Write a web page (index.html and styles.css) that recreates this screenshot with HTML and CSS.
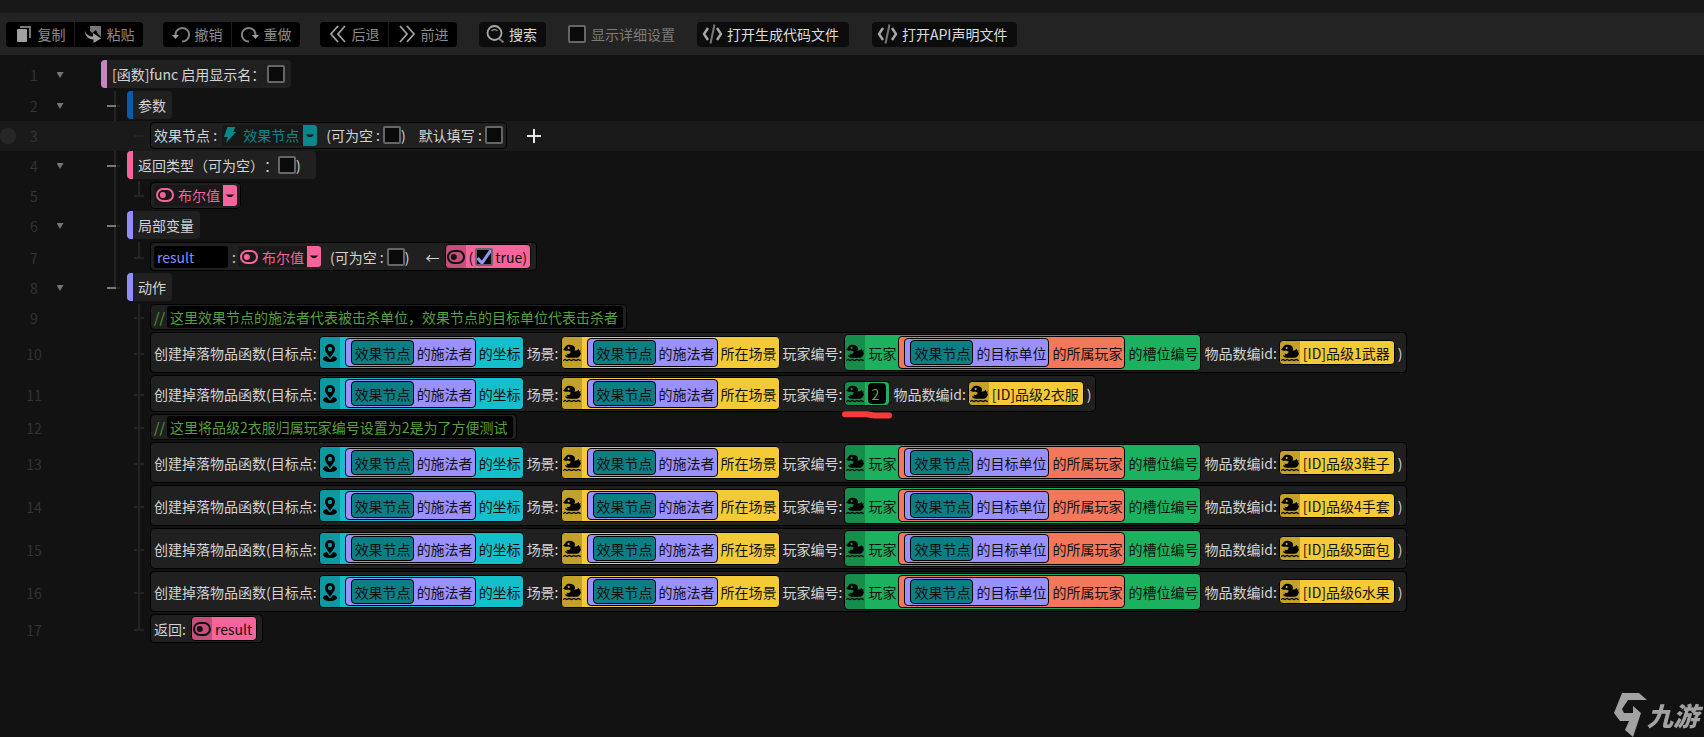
FILE: index.html
```html
<!DOCTYPE html>
<html lang="zh-CN">
<head>
<meta charset="utf-8">
<title>触发编辑器</title>
<link rel="stylesheet" href="styles.css">
</head>
<body>
<svg class="defs" aria-hidden="true">
  <symbol id="pin" viewBox="0 0 16 20"><path fill-rule="evenodd" d="M8 1a5 5 0 0 1 5 5c0 3-3 5.500-5 9-2-3.500-5-6-5-9a5 5 0 0 1 5-5zM8 3.800a2.200 2.200 0 1 0 0 4.400 2.200 2.200 0 0 0 0-4.400z"/><path d="M4.800 13C2.500 13.500 1 14.500 1 15.800 1 17.700 4 19 8 19s7-1.300 7-3.200c0-1.300-1.500-2.300-3.800-2.800L8 16.800z"/></symbol>
  <symbol id="duck" viewBox="0 0 18 18"><path fill-rule="evenodd" d="M0 5.400C1.400 4.400 1.800 3.400 2.800 2.200 3.800 1.200 5 .8 6.600.8 9.600.8 11.600 2 12 4.200c.1 1-.2 1.600-.8 2.200 1.500.4 3.400 0 4.600-1.600l.4 1.700 1.700.1-.9 1.500 1 .9c-.5 2.800-2 4.300-4 4.800H5.600C3.600 13.600 2.200 12.800 2 11.200l2.600.2L3.200 9.800l3 .2L8 7.800 5 6.400C3.600 7 1.600 6.800 0 5.400zM5.600 2.800a1.100 1.100 0 1 0 .1 0z"/><path d="M0 16.600l2-1.200 2 1.200 2.200-1.200 2.300 1.200 2.300-1.200 2.200 1.200 2.200-1.200 2.500 1.200" fill="none" stroke="currentColor" stroke-width="1.200"/></symbol>
  <symbol id="toggle" viewBox="0 0 18 14"><rect x="1" y="1" width="16" height="12" rx="6" fill="none" stroke="currentColor" stroke-width="2"/><circle cx="6.800" cy="7" r="3"/></symbol>
  <symbol id="bolt" viewBox="0 0 12 16"><path d="M3.500 0h8L9 5h3L2 16l1.800-6H0z"/></symbol>
  <symbol id="caret" viewBox="0 0 14 21"><path d="M2.500 9.500h9L8.500 12h-3z"/></symbol>
  <symbol id="code" viewBox="0 0 21 20"><path d="M6 4 2 10l4 6M15 4l4 6-4 6" fill="none" stroke="#a8a8a8" stroke-width="2.400"/><path d="M12.500.5 8.500 19.500" stroke="#777" stroke-width="2"/></symbol>
</svg>

<div class="strip"></div>
<header class="toolbar">
  <div class="group">
    <button type="button" class="tool"><svg class="ico" viewBox="0 0 18 18"><path d="M5 1h11v12h-2V3H5z" fill="#777"/><rect x="2" y="4" width="10" height="13" rx="1" fill="#a0a0a0"/></svg>复制</button>
    <button type="button" class="tool"><svg class="ico" viewBox="0 0 18 18"><path d="M6 1h11v11l-3-3-2-4-4 3-2-2z" fill="#777"/><path d="M1 5.500c1 4 4 6 8 6V8l8 5.500L9.500 18v-3.500C4 14.500 1 11 1 5.500z" fill="#a0a0a0"/></svg>粘贴</button>
  </div>
  <div class="group">
    <button type="button" class="tool"><svg class="ico" viewBox="0 0 18 18"><path d="M3.500 10A6.800 6.800 0 1 1 10 16.500" fill="none" stroke="#808080" stroke-width="2"/><path d="M0 10h7l-3.500 4z" fill="#a0a0a0"/></svg>撤销</button>
    <button type="button" class="tool"><svg class="ico" viewBox="0 0 18 18"><path d="M14.500 10A6.800 6.800 0 1 0 8 16.500" fill="none" stroke="#808080" stroke-width="2"/><path d="M18 10h-7l3.500 4z" fill="#a0a0a0"/></svg>重做</button>
  </div>
  <div class="group">
    <button type="button" class="tool"><svg class="ico" viewBox="0 0 18 18"><path d="M9 1 2 9l7 8M16 1 9 9l7 8" fill="none" stroke="#a0a0a0" stroke-width="1.800"/></svg>后退</button>
    <button type="button" class="tool"><svg class="ico" viewBox="0 0 18 18"><path d="m2 1 7 8-7 8M9 1l7 8-7 8" fill="none" stroke="#a0a0a0" stroke-width="1.800"/></svg>前进</button>
  </div>
  <button type="button" class="tool solo search"><svg class="ico" viewBox="0 0 18 18"><circle cx="8.500" cy="8" r="7" fill="none" stroke="#a8a8a8" stroke-width="1.800"/><path d="M5.500 6q3-3 6 0" fill="none" stroke="#888" stroke-width="1.300"/><path d="m13.500 14 4 3.500" stroke="#777" stroke-width="2"/></svg>搜索</button>
  <label class="detail"><input type="checkbox" class="box">显示详细设置</label>
  <button type="button" class="tool solo file"><svg class="ico-code"><use href="#code"/></svg>打开生成代码文件</button>
  <button type="button" class="tool solo file"><svg class="ico-code"><use href="#code"/></svg>打开API声明文件</button>
</header>

<main class="editor">
  <div class="row tall">
    <span class="mark"></span><span class="num">1</span><button type="button" class="fold" aria-label="折叠"></button>
    <div class="block head orchid"><label class="field"><span>[函数]func 启用显示名：</span><input type="checkbox" class="box"></label></div>
  </div>
  <div class="row">
    <span class="mark"></span><span class="num">2</span><button type="button" class="fold" aria-label="折叠"></button>
    <span class="guide main dash"></span>
    <div class="block head blue">参数</div>
  </div>
  <div class="row current">
    <span class="mark"></span><span class="num">3</span><span class="nofold"></span>
    <span class="guide"></span><span class="guide sub only"></span>
    <div class="block stmt">
      <span class="t">效果节点 : </span>
      <span class="type teal-type"><svg class="bolt"><use href="#bolt"/></svg><span class="pick"><select aria-label="参数类型"><option>效果节点</option></select><svg class="caret"><use href="#caret"/></svg></span></span>
      <label class="field gap"><span>(可为空 : </span><input type="checkbox" class="box"><span>)</span></label>
      <label class="field gap-wide"><span>默认填写 : </span><input type="checkbox" class="box"></label>
    </div>
    <button type="button" class="add" aria-label="添加"><svg viewBox="0 0 14 14"><path d="M7 0v14M0 7h14" stroke="#e8e8e8" stroke-width="2"/></svg></button>
  </div>
  <div class="row">
    <span class="mark"></span><span class="num">4</span><button type="button" class="fold" aria-label="折叠"></button>
    <span class="guide main dash"></span>
    <div class="block head rose"><label class="field"><span>返回类型（可为空）：</span><input type="checkbox" class="box"><span>)</span></label></div>
  </div>
  <div class="row">
    <span class="mark"></span><span class="num">5</span><span class="nofold"></span>
    <span class="guide main"></span><span class="guide sub last"></span>
    <div class="block stmt">
      <span class="type pink-type first"><svg class="toggle"><use href="#toggle"/></svg><span class="pick"><select aria-label="返回类型"><option>布尔值</option></select><svg class="caret"><use href="#caret"/></svg></span></span>
    </div>
  </div>
  <div class="row tall">
    <span class="mark"></span><span class="num">6</span><button type="button" class="fold" aria-label="折叠"></button>
    <span class="guide main dash"></span>
    <div class="block head violet">局部变量</div>
  </div>
  <div class="row">
    <span class="mark"></span><span class="num">7</span><span class="nofold"></span>
    <span class="guide main"></span><span class="guide sub last"></span>
    <div class="block stmt roomy">
      <input type="text" class="name" value="result" aria-label="变量名">
      <span class="colon">:</span>
      <span class="type pink-type"><svg class="toggle"><use href="#toggle"/></svg><span class="pick"><select aria-label="变量类型"><option>布尔值</option></select><svg class="caret"><use href="#caret"/></svg></span></span>
      <label class="field gap"><span>(可为空 : </span><input type="checkbox" class="box"><span>)</span></label>
      <span class="arrow">←</span>
      <span class="p pink"><i class="tag"><svg class="toggle"><use href="#toggle"/></svg></i><label class="field value"><span>(</span><input type="checkbox" class="box" checked><span>true)</span></label></span>
    </div>
  </div>
  <div class="row tall">
    <span class="mark"></span><span class="num">8</span><button type="button" class="fold" aria-label="折叠"></button>
    <span class="guide main dash end"></span>
    <div class="block head violet">动作</div>
  </div>
  <div class="row auto">
    <span class="mark"></span><span class="num">9</span><span class="nofold"></span>
    <span class="guide"></span><span class="guide sub"></span>
    <div class="block stmt note"><span>//</span><input type="text" class="note-long" aria-label="注释" value="这里效果节点的施法者代表被击杀单位，效果节点的目标单位代表击杀者"></div>
  </div>
  <div class="row auto">
    <span class="mark"></span><span class="num">10</span><span class="nofold"></span>
    <span class="guide"></span><span class="guide sub"></span>
    <div class="block stmt call"><span class="t">创建掉落物品函数(目标点:</span><span class="p cyan"><i class="tag"><svg class="pin"><use href="#pin"/></svg></i><span class="p purple nest"><span class="p teal"><span class="t">效果节点</span></span><span class="t">的施法者</span></span><span class="t">的坐标</span></span><span class="t">场景:</span><span class="p yellow"><i class="tag"><svg class="duck"><use href="#duck"/></svg></i><span class="p purple nest"><span class="p teal"><span class="t">效果节点</span></span><span class="t">的施法者</span></span><span class="t">所在场景</span></span><span class="t">玩家编号:</span><span class="p green"><i class="tag"><svg class="duck"><use href="#duck"/></svg></i><span class="t">玩家</span><span class="p coral"><span class="p purple"><span class="p teal"><span class="t">效果节点</span></span><span class="t">的目标单位</span></span><span class="t">的所属玩家</span></span><span class="t">的槽位编号</span></span><span class="t">物品数编id:</span><span class="p yellow"><i class="tag"><svg class="duck"><use href="#duck"/></svg></i><span class="t id">[ID]品级1武器</span></span><span class="t">)</span></div>
  </div>
  <div class="row auto">
    <span class="mark"></span><span class="num">11</span><span class="nofold"></span>
    <span class="guide"></span><span class="guide sub"></span>
    <div class="block stmt call"><span class="t">创建掉落物品函数(目标点:</span><span class="p cyan"><i class="tag"><svg class="pin"><use href="#pin"/></svg></i><span class="p purple nest"><span class="p teal"><span class="t">效果节点</span></span><span class="t">的施法者</span></span><span class="t">的坐标</span></span><span class="t">场景:</span><span class="p yellow"><i class="tag"><svg class="duck"><use href="#duck"/></svg></i><span class="p purple nest"><span class="p teal"><span class="t">效果节点</span></span><span class="t">的施法者</span></span><span class="t">所在场景</span></span><span class="t">玩家编号:</span><span class="p green marked"><i class="tag"><svg class="duck"><use href="#duck"/></svg></i><input type="text" class="digit" value="2" aria-label="玩家编号"><svg class="scribble" viewBox="0 0 50 8"><path d="M3 3.200h22l7 1.300h15" fill="none" stroke="#f93a3a" stroke-width="6" stroke-linecap="round" stroke-linejoin="round"/></svg></span><span class="t">物品数编id:</span><span class="p yellow"><i class="tag"><svg class="duck"><use href="#duck"/></svg></i><span class="t id">[ID]品级2衣服</span></span><span class="t">)</span></div>
  </div>
  <div class="row auto">
    <span class="mark"></span><span class="num">12</span><span class="nofold"></span>
    <span class="guide"></span><span class="guide sub"></span>
    <div class="block stmt note"><span>//</span><input type="text" class="note-short" aria-label="注释" value="这里将品级2衣服归属玩家编号设置为2是为了方便测试"></div>
  </div>
  <div class="row auto">
    <span class="mark"></span><span class="num">13</span><span class="nofold"></span>
    <span class="guide"></span><span class="guide sub"></span>
    <div class="block stmt call"><span class="t">创建掉落物品函数(目标点:</span><span class="p cyan"><i class="tag"><svg class="pin"><use href="#pin"/></svg></i><span class="p purple nest"><span class="p teal"><span class="t">效果节点</span></span><span class="t">的施法者</span></span><span class="t">的坐标</span></span><span class="t">场景:</span><span class="p yellow"><i class="tag"><svg class="duck"><use href="#duck"/></svg></i><span class="p purple nest"><span class="p teal"><span class="t">效果节点</span></span><span class="t">的施法者</span></span><span class="t">所在场景</span></span><span class="t">玩家编号:</span><span class="p green"><i class="tag"><svg class="duck"><use href="#duck"/></svg></i><span class="t">玩家</span><span class="p coral"><span class="p purple"><span class="p teal"><span class="t">效果节点</span></span><span class="t">的目标单位</span></span><span class="t">的所属玩家</span></span><span class="t">的槽位编号</span></span><span class="t">物品数编id:</span><span class="p yellow"><i class="tag"><svg class="duck"><use href="#duck"/></svg></i><span class="t id">[ID]品级3鞋子</span></span><span class="t">)</span></div>
  </div>
  <div class="row auto">
    <span class="mark"></span><span class="num">14</span><span class="nofold"></span>
    <span class="guide"></span><span class="guide sub"></span>
    <div class="block stmt call"><span class="t">创建掉落物品函数(目标点:</span><span class="p cyan"><i class="tag"><svg class="pin"><use href="#pin"/></svg></i><span class="p purple nest"><span class="p teal"><span class="t">效果节点</span></span><span class="t">的施法者</span></span><span class="t">的坐标</span></span><span class="t">场景:</span><span class="p yellow"><i class="tag"><svg class="duck"><use href="#duck"/></svg></i><span class="p purple nest"><span class="p teal"><span class="t">效果节点</span></span><span class="t">的施法者</span></span><span class="t">所在场景</span></span><span class="t">玩家编号:</span><span class="p green"><i class="tag"><svg class="duck"><use href="#duck"/></svg></i><span class="t">玩家</span><span class="p coral"><span class="p purple"><span class="p teal"><span class="t">效果节点</span></span><span class="t">的目标单位</span></span><span class="t">的所属玩家</span></span><span class="t">的槽位编号</span></span><span class="t">物品数编id:</span><span class="p yellow"><i class="tag"><svg class="duck"><use href="#duck"/></svg></i><span class="t id">[ID]品级4手套</span></span><span class="t">)</span></div>
  </div>
  <div class="row auto">
    <span class="mark"></span><span class="num">15</span><span class="nofold"></span>
    <span class="guide"></span><span class="guide sub"></span>
    <div class="block stmt call"><span class="t">创建掉落物品函数(目标点:</span><span class="p cyan"><i class="tag"><svg class="pin"><use href="#pin"/></svg></i><span class="p purple nest"><span class="p teal"><span class="t">效果节点</span></span><span class="t">的施法者</span></span><span class="t">的坐标</span></span><span class="t">场景:</span><span class="p yellow"><i class="tag"><svg class="duck"><use href="#duck"/></svg></i><span class="p purple nest"><span class="p teal"><span class="t">效果节点</span></span><span class="t">的施法者</span></span><span class="t">所在场景</span></span><span class="t">玩家编号:</span><span class="p green"><i class="tag"><svg class="duck"><use href="#duck"/></svg></i><span class="t">玩家</span><span class="p coral"><span class="p purple"><span class="p teal"><span class="t">效果节点</span></span><span class="t">的目标单位</span></span><span class="t">的所属玩家</span></span><span class="t">的槽位编号</span></span><span class="t">物品数编id:</span><span class="p yellow"><i class="tag"><svg class="duck"><use href="#duck"/></svg></i><span class="t id">[ID]品级5面包</span></span><span class="t">)</span></div>
  </div>
  <div class="row auto">
    <span class="mark"></span><span class="num">16</span><span class="nofold"></span>
    <span class="guide"></span><span class="guide sub"></span>
    <div class="block stmt call"><span class="t">创建掉落物品函数(目标点:</span><span class="p cyan"><i class="tag"><svg class="pin"><use href="#pin"/></svg></i><span class="p purple nest"><span class="p teal"><span class="t">效果节点</span></span><span class="t">的施法者</span></span><span class="t">的坐标</span></span><span class="t">场景:</span><span class="p yellow"><i class="tag"><svg class="duck"><use href="#duck"/></svg></i><span class="p purple nest"><span class="p teal"><span class="t">效果节点</span></span><span class="t">的施法者</span></span><span class="t">所在场景</span></span><span class="t">玩家编号:</span><span class="p green"><i class="tag"><svg class="duck"><use href="#duck"/></svg></i><span class="t">玩家</span><span class="p coral"><span class="p purple"><span class="p teal"><span class="t">效果节点</span></span><span class="t">的目标单位</span></span><span class="t">的所属玩家</span></span><span class="t">的槽位编号</span></span><span class="t">物品数编id:</span><span class="p yellow"><i class="tag"><svg class="duck"><use href="#duck"/></svg></i><span class="t id">[ID]品级6水果</span></span><span class="t">)</span></div>
  </div>
  <div class="row auto">
    <span class="mark"></span><span class="num">17</span><span class="nofold"></span>
    <span class="guide"></span><span class="guide sub last"></span>
    <div class="block stmt roomy"><span class="t">返回: </span><span class="p pink"><i class="tag"><svg class="toggle"><use href="#toggle"/></svg></i><span class="t id">result</span></span></div>
  </div>
</main>

<div class="watermark"><svg viewBox="0 0 33 44"><path d="M8 0h17l8 7H14L8 16l2 4h9v-7l8 7-8 24-8-7 4-9H6L0 20z" fill="#a2a2a2"/></svg><span>九游</span></div>
</body>
</html>
```

FILE: styles.css
```css
* { box-sizing: border-box; }

body {
  margin: 0;
  min-height: 100vh;
  background: #121212;
  color: #d4d4d4;
  font: 14px/20px "Noto Sans CJK SC", "Noto Sans", sans-serif;
  text-spacing-trim: space-all;
  overflow-y: hidden;
}

button, input, select { font: inherit; color: inherit; margin: 0; padding: 0; border: 0; background: none; }
svg { display: block; fill: currentColor; }
.defs { display: none; }

.strip { height: 13px; background: #181818; }

/* Toolbar */
.toolbar {
  display: flex;
  align-items: center;
  height: 42px;
  padding: 0 6px;
  background: #232323;
  white-space: nowrap;
}
.group { display: flex; gap: 1px; margin-right: 20px; border-radius: 4px; overflow: hidden; background: #1c1c1c; }
.tool {
  display: flex;
  align-items: center;
  justify-content: center;
  gap: 5px;
  width: 68px;
  height: 25px;
  background: #000;
  color: #8c8c8c;
}
.ico { width: 18px; height: 18px; }
.ico-code { width: 21px; height: 20px; }
.solo { width: auto; padding: 0 9px 0 7px; border-radius: 4px; background: #0c0c0c; color: #dcdcdc; }
.search { margin: 0 22px 0 2px; }
.detail { display: flex; align-items: center; gap: 5px; color: #7c7c7c; margin-right: 22px; }
.file { padding: 0 10px 0 5px; margin-right: 23px; gap: 4px; }

.box {
  appearance: none;
  flex: none;
  width: 18px;
  height: 18px;
  border: 2px solid #666;
  border-radius: 2px;
  background: #0a0a0a;
}
.box:checked {
  background: #0a0a0a url("data:image/svg+xml,%3Csvg xmlns='http://www.w3.org/2000/svg' viewBox='0 0 18 18'%3E%3Cpath d='M2.500 10 7 15 16 2' fill='none' stroke='%239a94ff' stroke-width='3'/%3E%3C/svg%3E") center / 18px 18px no-repeat border-box;
}

/* Code rows */
.editor { padding-top: 5px; overflow-x: auto; }
.row { display: flex; align-items: center; min-height: 30px; white-space: nowrap; }
.tall { min-height: 31px; padding-bottom: 1px; }
.tall .guide { margin-bottom: -1px; }
.auto { min-height: 28px; }
.current { background: #1a1a1a; }
.mark { width: 20px; flex: none; }
.current .mark::before { content: ""; display: block; width: 16px; height: 16px; border-radius: 50%; background: #272727; }
.num { width: 28px; flex: none; text-align: center; color: #333; }
.fold, .nofold { flex: none; width: 24px; height: 20px; margin-right: 29px; }
.fold::before {
  content: "";
  display: block;
  width: 7px;
  height: 6px;
  margin: 0 auto;
  background: #757575;
  clip-path: polygon(0 0, 100% 0, 50% 100%);
}

/* Tree lines */
.guide { flex: none; align-self: stretch; width: 26px; background-repeat: no-repeat; }
.main { background-image: linear-gradient(#232323, #232323); background-size: 2px 100%; background-position: 13px 0; }
.dash {
  background-image: linear-gradient(#777, #777), linear-gradient(#232323, #232323), linear-gradient(#232323, #232323);
  background-size: 9px 2px, 12px 2px, 2px 100%;
  background-position: 6px 14px, 7px 14px, 13px 0;
}
.end { background-size: 9px 2px, 12px 2px, 2px 15px; }
.sub {
  width: 23px;
  background-image: linear-gradient(#232323, #232323), linear-gradient(#232323, #232323);
  background-size: 10px 2px, 2px 100%;
  background-position: 7px center, 11px 0;
}
.last { background-size: 10px 2px, 2px 50%; }
.only { background-size: 10px 2px, 0 0; }

.block { display: flex; align-items: center; flex: none; margin-bottom: 2px; border-radius: 4px; background: #202020; }
.head { min-height: 28px; border-left: 6px solid; padding: 0 6px 0 5px; background: linear-gradient(#202020, #202020) padding-box; }
.orchid { border-color: #c586c0; }
.orchid .field { gap: 2px; }
.blue { border-color: #0a5cab; }
.rose { border-color: #f7639b; padding-right: 15px; }
.violet { border-color: #948cfb; }

.stmt { min-height: 27px; padding: 1px 3px 1px 0; border: 1px solid #000; }
.roomy { min-height: 28px; padding-right: 5px; }
.call { padding-right: 1px; }
.t { padding: 0 2px 0 3px; white-space: pre; }
.id { padding-right: 4px; }
.field { display: flex; align-items: center; white-space: pre; }
.gap { margin-left: 9px; }
.gap-wide { margin-left: 13px; }

.type { display: flex; align-items: center; gap: 4px; height: 21px; padding-left: 2px; border-radius: 3px; background: #181818; }
.first { margin-left: 3px; }
.teal-type { color: #0b868c; gap: 7px; }
.pink-type { color: #f7639b; }
.pick { display: grid; }
.pick > * { grid-area: 1 / 1; }
.pick select { appearance: none; padding-right: 17px; height: 21px; outline: 0; }
.teal-type select { padding-right: 18px; }
.caret { width: 14px; height: 21px; justify-self: end; border-radius: 0 3px 3px 0; background: currentColor; fill: #16191a; pointer-events: none; }
.bolt { width: 12px; height: 16px; }
.toggle { width: 18px; height: 14px; }
.add { margin-left: 20px; }
.add svg { width: 14px; height: 14px; }

.name { width: 74px; height: 22px; margin-left: 3px; padding-left: 3px; border-radius: 3px; background: #000; color: #8f88f5; }
.colon { padding: 0 2px 0 4px; }
.arrow { margin: 0 5px 0 16px; }
.value { padding: 0 3px; gap: 2px; }

.note { min-height: 26px; padding: 0 3px; gap: 2px; color: #57a03c; }
.note input { height: 22px; padding-left: 3px; border-radius: 3px; background: #000; }
.note-long { width: 456px; }
.note-short { width: 346px; }

/* Expression pills */
.p { display: flex; align-items: center; align-self: center; min-height: 25px; padding: 1px 0; border: 1px solid #000; border-radius: 4px; color: #111; }
.tag { display: flex; align-items: center; justify-content: center; align-self: stretch; width: 20px; margin: -1px 0; border-radius: 3px 0 0 3px; background: rgb(0 0 0 / 20%); }
.teal { background: #0b7f84; }
.purple { background: #9a90ff; padding-left: 5px; }
.nest { margin-left: 5px; }
.coral { background: #f3775b; padding-left: 5px; }
.cyan { background: #13bfca; }
.yellow { background: #f4ca37; }
.green { background: #1cb15e; }
.pink { background: #f7639b; }
.pin { width: 16px; height: 20px; color: #000; }
.duck { width: 18px; height: 18px; color: #000; }
.marked { position: relative; }
.digit { width: 18px; height: 21px; margin: 0 3px; padding-left: 3px; border-radius: 4px; background: #000; color: #6f9f5a; }
.scribble { position: absolute; left: -3px; top: 29px; width: 50px; height: 8px; }

.watermark { position: fixed; right: 5px; bottom: 0; display: flex; align-items: center; color: #a2a2a2; font-size: 26px; line-height: 44px; font-weight: 900; font-style: italic; }
.watermark svg { width: 33px; height: 44px; }
```
